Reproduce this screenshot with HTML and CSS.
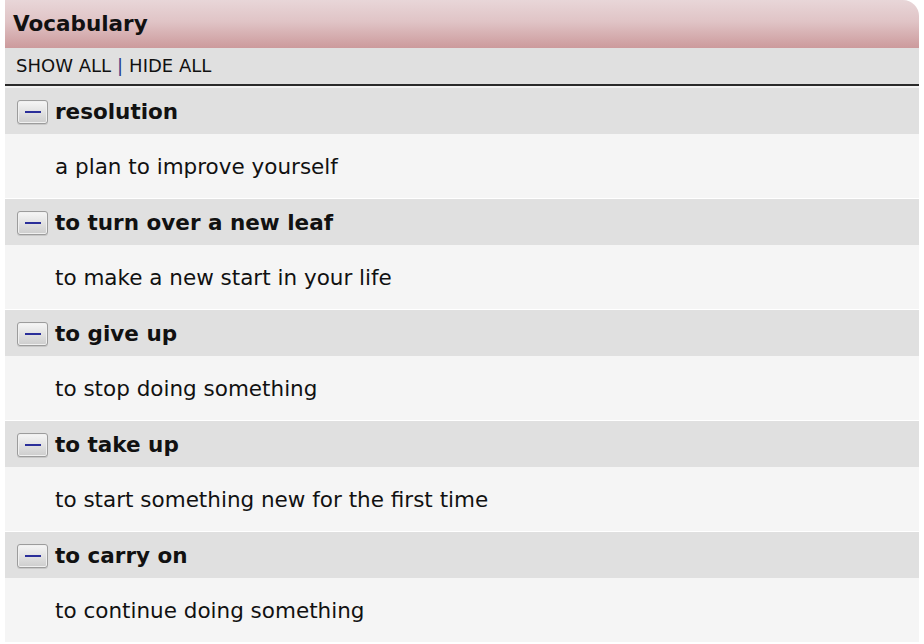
FILE: index.html
```html
<!DOCTYPE html>
<html>
<head>
<meta charset="utf-8">
<link rel="stylesheet" href="styles.css">
</head>
<body>
<div class="panel">
  <div class="panel-head">Vocabulary</div>
  <div class="toolbar"><span class="tool">SHOW ALL</span><span class="sep">|</span><span class="tool">HIDE ALL</span></div>
  <div class="list">
    <div class="item">
      <div class="term"><span class="toggle"><span class="minus"></span></span><span class="word">resolution</span></div>
      <div class="def">a plan to improve yourself</div>
    </div>
    <div class="item">
      <div class="term"><span class="toggle"><span class="minus"></span></span><span class="word">to turn over a new leaf</span></div>
      <div class="def">to make a new start in your life</div>
    </div>
    <div class="item">
      <div class="term"><span class="toggle"><span class="minus"></span></span><span class="word">to give up</span></div>
      <div class="def">to stop doing something</div>
    </div>
    <div class="item">
      <div class="term"><span class="toggle"><span class="minus"></span></span><span class="word">to take up</span></div>
      <div class="def">to start something new for the first time</div>
    </div>
    <div class="item">
      <div class="term"><span class="toggle"><span class="minus"></span></span><span class="word">to carry on</span></div>
      <div class="def">to continue doing something</div>
    </div>
  </div>
</div>
</body>
</html>
```

FILE: styles.css
```css
html, body {
  margin: 0;
  padding: 0;
  background: #ffffff;
  overflow: hidden;
}
body {
  font-family: "DejaVu Sans", Verdana, sans-serif;
  color: #111;
}
.panel {
  margin: 0 5px;
}
.panel-head {
  height: 48px;
  box-sizing: border-box;
  padding: 11px 0 0 8px;
  font-size: 21.5px;
  line-height: 26px;
  font-weight: bold;
  color: #111;
  background: linear-gradient(to bottom, #e8d6d8 0%, #e0c4c6 45%, #cc9a9c 100%);
  border-top-right-radius: 16px;
}
.toolbar {
  height: 38px;
  box-sizing: border-box;
  background: #e0e0e0;
  padding: 7px 0 0 11px;
  font-size: 18px;
  line-height: 22px;
  color: #111;
  border-bottom: 2px solid #2a2a2a;
  display: flex;
  gap: 6px;
}
.sep {
  color: #2a3a8a;
}
.list {
  border-top: 2px solid #f2f2f2;
  display: flex;
  flex-direction: column;
  gap: 1px;
}
.term {
  height: 46px;
  box-sizing: border-box;
  background: #e0e0e0;
  display: flex;
  align-items: center;
  padding: 1px 0 0 12px;
  gap: 7px;
}
.toggle {
  width: 31px;
  height: 24px;
  box-sizing: border-box;
  border: 1px solid #9c9c9c;
  border-radius: 3px;
  background: linear-gradient(to bottom, #f6f6f6 0%, #e2e2e2 50%, #cdcdcd 100%);
  box-shadow: inset 0 0 0 1px #f0f0f0, 0 1px 0 #c8c8c8;
  display: flex;
  align-items: center;
  justify-content: center;
}
.minus {
  width: 16px;
  height: 2px;
  background: #2b2f9a;
}
.word {
  font-size: 21.5px;
  font-weight: bold;
  color: #111;
}
.def {
  height: 64px;
  box-sizing: border-box;
  background: #f5f5f5;
  display: flex;
  align-items: center;
  padding: 1px 0 0 50px;
  font-size: 21.5px;
  color: #111;
}
```
